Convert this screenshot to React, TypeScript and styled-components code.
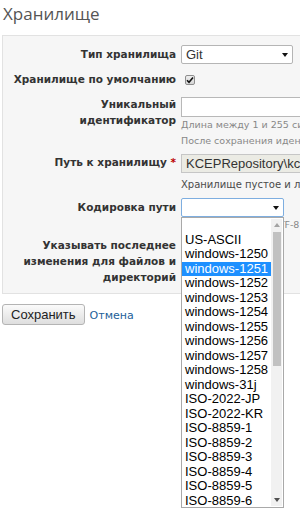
import React from 'react';
import styled, { createGlobalStyle } from 'styled-components';

const GlobalStyle = createGlobalStyle`
  html, body {
    margin: 0;
    padding: 0;
    background: #fff;
    overflow: hidden;
  }
  body {
    font-family: "DejaVu Sans", Verdana, sans-serif;
    font-size: 11px;
    color: #333;
  }
`;

const Page = styled.div`
  width: 300px;
  height: 524px;
  overflow: hidden;
  padding-left: 2px;
  box-sizing: border-box;
`;

const Title = styled.h2`
  margin: 0;
  padding: 3px 0 0 1px;
  font-family: "Open Sans", sans-serif;
  font-size: 17px;
  font-weight: normal;
  line-height: 22px;
  color: #555;
`;

const Box = styled.div`
  margin-top: 10px;
  width: 340px;
  background: #f6f6f6;
  border: 1px solid #e2e2e2;
  padding: 9px 0 8px;
`;

const Row = styled.div<{ $gap?: number }>`
  display: flex;
  align-items: flex-start;
  margin-top: ${p => p.$gap ?? 0}px;
`;

const Label = styled.label<{ $offset?: number }>`
  width: 173px;
  flex-shrink: 0;
  box-sizing: border-box;
  padding: ${p => p.$offset ?? 0}px 0 0 4px;
  text-align: right;
  font-size: 10.5px;
  font-weight: bold;
  line-height: 16px;
  color: #333;
`;

const Required = styled.span`
  color: #bb0000;
`;

const Field = styled.div<{ $offset?: number }>`
  display: flex;
  flex-direction: column;
  margin-left: 5px;
  padding-top: ${p => p.$offset ?? 0}px;
`;

const SelectBox = styled.div<{ $width: number; $focused?: boolean }>`
  position: relative;
  display: flex;
  align-items: center;
  justify-content: space-between;
  box-sizing: border-box;
  width: ${p => p.$width}px;
  height: 19px;
  padding: 0 4px 0 4px;
  background: #fff;
  border: 1px solid ${p => (p.$focused ? '#7eaee0' : '#b5b5b5')};
  border-radius: 2px;
  font-family: "Liberation Sans", Arial, sans-serif;
  font-size: 13px;
  color: #333;
`;

const TextInput = styled.div<{ $disabled?: boolean }>`
  box-sizing: border-box;
  width: 200px;
  height: ${p => (p.$disabled ? 19 : 20)}px;
  padding: 0 4px;
  background: ${p => (p.$disabled ? '#ebebe4' : '#fff')};
  border: 1px solid ${p => (p.$disabled ? '#c6c6c6' : '#b8b8b8')};
  font-family: "Liberation Sans", Arial, sans-serif;
  font-size: 13px;
  line-height: 17px;
  color: #333;
  white-space: nowrap;
  overflow: hidden;
`;

const Hint = styled.em<{ $strong?: boolean; $gap?: number; $indent?: number }>`
  display: block;
  font-style: normal;
  white-space: nowrap;
  margin-top: ${p => p.$gap ?? 0}px;
  padding-left: ${p => p.$indent ?? 0}px;
  font-size: ${p => (p.$strong ? 10 : 9.5)}px;
  line-height: 16px;
  color: ${p => (p.$strong ? '#4a4a4a' : '#888')};
`;

const Checkbox = styled.span`
  display: flex;
  align-items: center;
  justify-content: center;
  box-sizing: border-box;
  width: 10px;
  height: 10px;
  margin-left: 4px;
  border: 1px solid #8e8e8e;
  border-radius: 2px;
  background: linear-gradient(#eeeeee, #d6d6d6);
`;

const DropWrap = styled.div`
  position: relative;
`;

const ListBox = styled.div`
  position: absolute;
  top: 100%;
  left: 0;
  z-index: 5;
  display: flex;
  box-sizing: border-box;
  width: 103px;
  height: 291px;
  background: #fff;
  border: 1px solid #a9a9a9;
  overflow: hidden;
`;

const Options = styled.ul`
  flex: 1;
  margin: 0;
  padding: 0;
  list-style: none;
  font-family: "Liberation Sans", Arial, sans-serif;
  font-size: 13px;
  line-height: 14.5px;
  color: #000;
`;

const Option = styled.li<{ $selected?: boolean }>`
  height: 14.5px;
  padding-left: 3px;
  white-space: nowrap;
  background: ${p => (p.$selected ? '#1e90ff' : 'transparent')};
  color: ${p => (p.$selected ? '#fff' : '#000')};
`;

const ScrollTrack = styled.div`
  display: flex;
  flex-direction: column;
  align-items: center;
  width: 11px;
  margin: 1px 1px 1px 0;
  background: #f1f1f1;
`;

const ScrollArrow = styled.div`
  display: flex;
  align-items: center;
  justify-content: center;
  width: 11px;
  height: 12px;
`;

const ScrollThumb = styled.div`
  width: 8px;
  height: 134px;
  margin-top: 1px;
  background: #c1c1c1;
`;

const ScrollSpacer = styled.div`
  flex: 1;
`;

const Actions = styled.div`
  display: flex;
  align-items: baseline;
  gap: 5px;
  margin-top: 10px;
`;

const Button = styled.button`
  box-sizing: border-box;
  height: 21px;
  padding: 0 8px;
  border: 1px solid #b4b4b4;
  border-radius: 3px;
  background: linear-gradient(#fbfbfb, #dedede);
  font-family: "Liberation Sans", Arial, sans-serif;
  font-size: 13px;
  color: #222;
`;

const CancelLink = styled.a`
  color: #225f99;
  text-decoration: none;
  font-size: 11px;
`;

const Arrow = ({ color = '#111' }: { color?: string }) => (
  <svg width="6" height="4" viewBox="0 0 6 4">
    <path d="M0 0h6L3 4z" fill={color} />
  </svg>
);

const ArrowUp = ({ color }: { color: string }) => (
  <svg width="6" height="4" viewBox="0 0 6 4">
    <path d="M0 4h6L3 0z" fill={color} />
  </svg>
);

const encodings = [
  '',
  'US-ASCII',
  'windows-1250',
  'windows-1251',
  'windows-1252',
  'windows-1253',
  'windows-1254',
  'windows-1255',
  'windows-1256',
  'windows-1257',
  'windows-1258',
  'windows-31j',
  'ISO-2022-JP',
  'ISO-2022-KR',
  'ISO-8859-1',
  'ISO-8859-2',
  'ISO-8859-3',
  'ISO-8859-4',
  'ISO-8859-5',
  'ISO-8859-6',
];

export default function App() {
  return (
    <Page>
      <GlobalStyle />
      <Title>Хранилище</Title>
      <Box>
        <Row>
          <Label $offset={1}>Тип хранилища</Label>
          <Field>
            <SelectBox $width={112}>
              <span>Git</span>
              <Arrow />
            </SelectBox>
          </Field>
        </Row>

        <Row $gap={7}>
          <Label>Хранилище по умолчанию</Label>
          <Field $offset={4}>
            <Checkbox>
              <svg width="8" height="8" viewBox="0 0 8 8">
                <path d="M1 4.2l2 2L7 1.5" stroke="#111" strokeWidth="1.6" fill="none" />
              </svg>
            </Checkbox>
          </Field>
        </Row>

        <Row $gap={9}>
          <Label>Уникальный идентификатор</Label>
          <Field $offset={1}>
            <TextInput />
            <Hint>Длина между 1 и 255 символов. Допускаются только строчные латинские буквы (a-z), цифры, тире и подчёркивания.</Hint>
            <Hint>После сохранения идентификатор изменить нельзя.</Hint>
          </Field>
        </Row>

        <Row $gap={5}>
          <Label>
            Путь к хранилищу <Required>*</Required>
          </Label>
          <Field>
            <TextInput $disabled>KCEPRepository\kcep-portal</TextInput>
            <Hint $strong $gap={4}>Хранилище пустое и локальный путь к нему можно изменить.</Hint>
          </Field>
        </Row>

        <Row $gap={5}>
          <Label $offset={1}>Кодировка пути</Label>
          <Field>
            <DropWrap>
              <SelectBox $width={103} $focused>
                <span />
                <Arrow />
              </SelectBox>
              <ListBox>
                <Options>
                  {encodings.map(e => (
                    <Option key={e || 'blank'} $selected={e === 'windows-1251'}>
                      {e}
                    </Option>
                  ))}
                </Options>
                <ScrollTrack>
                  <ScrollArrow>
                    <ArrowUp color="#a3a3a3" />
                  </ScrollArrow>
                  <ScrollThumb />
                  <ScrollSpacer />
                  <ScrollArrow>
                    <Arrow color="#505050" />
                  </ScrollArrow>
                </ScrollTrack>
              </ListBox>
            </DropWrap>
            <Hint $indent={12}>По умолчанию: UTF-8</Hint>
          </Field>
        </Row>

        <Row $gap={4}>
          <Label>Указывать последнее изменения для файлов и директорий</Label>
          <Field $offset={3}>
            <Checkbox />
          </Field>
        </Row>
      </Box>

      <Actions>
        <Button type="button">Сохранить</Button>
        <CancelLink href="#">Отмена</CancelLink>
      </Actions>
    </Page>
  );
}
